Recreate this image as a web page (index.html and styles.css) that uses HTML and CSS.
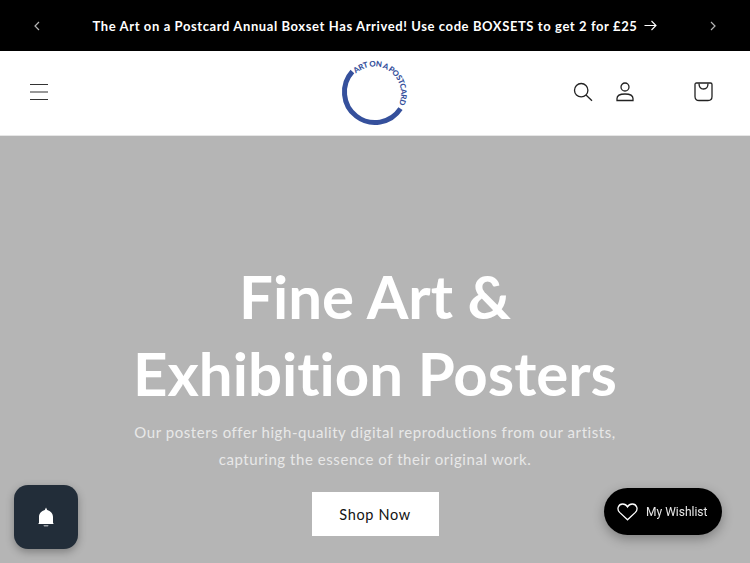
FILE: index.html
```html
<!DOCTYPE html>
<html lang="en">
<head>
<meta charset="utf-8">
<title>Art on a Postcard</title>
<link rel="stylesheet" href="styles.css">
</head>
<body>
<div class="announce">
  <button class="chev" aria-label="Previous"><svg width="8" height="10" viewBox="0 0 8 10"><path d="M6 1 2 5l4 4" fill="none" stroke="#b5b5b5" stroke-width="1.2"/></svg></button>
  <a class="announce-text">The Art on a Postcard Annual Boxset Has Arrived! Use code BOXSETS to get 2 for £25
    <svg class="arrow" width="13" height="11" viewBox="0 0 13 11"><path d="M0.5 5.5h11M7.5 1l4.5 4.5L7.5 10" fill="none" stroke="#fff" stroke-width="1.1"/></svg>
  </a>
  <button class="chev" aria-label="Next"><svg width="8" height="10" viewBox="0 0 8 10"><path d="M2 1l4 4-4 4" fill="none" stroke="#b5b5b5" stroke-width="1.2"/></svg></button>
</div>
<header class="header">
  <div class="header-left">
    <svg width="20" height="18" viewBox="0 0 20 18"><path d="M1 1.500h18M1 9h18M1 16.500h18" stroke="#333" stroke-width="1.1" fill="none"/></svg>
  </div>
  <a class="logo">
    <svg width="76" height="76" viewBox="0 0 76 76">
      <defs><path id="ring" d="M19 19.500A27 27 0 0 1 62 50"/></defs>
      <path d="M15.400 17.500A30.500 30.500 0 1 0 63.500 54.700" fill="none" stroke="#35509c" stroke-width="5"/>
      <text class="logo-text"><textPath href="#ring" textLength="73" lengthAdjust="spacing">ART ON A POSTCARD</textPath></text>
    </svg>
  </a>
  <div class="header-icons">
    <svg class="icon-search" width="20" height="20" viewBox="0 0 20 20"><circle cx="8.200" cy="8.200" r="6.700" fill="none" stroke="#222" stroke-width="1.300"/><path d="M13 13l6 5.800" stroke="#222" stroke-width="1.300"/></svg>
    <svg class="icon-user" width="18" height="20" viewBox="0 0 18 20"><circle cx="9" cy="5" r="4" fill="none" stroke="#222" stroke-width="1.300"/><path d="M1 18.500v-2c0-3 3-4.500 8-4.500s8 1.500 8 4.500v2z" fill="none" stroke="#222" stroke-width="1.300"/></svg>
    <svg class="icon-cart" width="19" height="20" viewBox="0 0 19 20"><path d="M2.500 1h14c1 0 1.500.6 1.500 1.500v12c0 2.500-1.500 4-4 4H5c-2.500 0-4-1.500-4-4v-12C1 1.600 1.500 1 2.500 1z" fill="none" stroke="#222" stroke-width="1.300"/><path d="M5 1.500c0 3.500 2 5.500 4.500 5.500S14 5 14 1.500" fill="none" stroke="#222" stroke-width="1.300"/></svg>
  </div>
</header>
<main class="hero">
  <h1 class="hero-title">Fine Art &amp;<br>Exhibition Posters</h1>
  <p class="hero-text">Our posters offer high-quality digital reproductions from our artists,<br>capturing the essence of their original work.</p>
  <a class="hero-btn">Shop Now</a>
</main>
<div class="bell">
  <svg class="bell-icon" width="20" height="22" viewBox="0 0 20 22"><path d="M10 0.500l1.200 2.600C14.500 4 17 6.500 17 10v5.500c0 .9.600 1.500 1.400 1.500H1.600c.8 0 1.400-.6 1.400-1.500V10c0-3.500 2.500-6 5.800-6.900z" fill="#fff"/><path d="M7.500 18h5l-.5 1.500H8z" fill="#9aa0a6"/></svg>
</div>
<div class="wishlist">
  <svg width="21" height="18" viewBox="0 0 21 18"><path d="M10.500 16.800 2.600 9.400C-.6 6.200 1.300 1 5.700 1c2.200 0 3.800 1.100 4.800 2.900C11.500 2.100 13.100 1 15.300 1c4.400 0 6.300 5.200 3.100 8.400z" fill="none" stroke="#fff" stroke-width="1.300"/></svg>
  <span>My Wishlist</span>
</div>
</body>
</html>
```
FILE: styles.css
```css
* { box-sizing: border-box; }
html, body { margin: 0; padding: 0; height: 563px; overflow: hidden; }
body { font-family: Lato, "Liberation Sans", sans-serif; background: #fff; color: #121212; font-variant-ligatures: none; }

.announce {
  height: 51px;
  background: #000;
  display: flex;
  align-items: center;
  justify-content: space-between;
  padding: 0 32px;
}
.chev { background: none; border: 0; padding: 0; width: 10px; display: flex; justify-content: center; }
.announce-text {
  color: #fff;
  font-size: 13px;
  font-weight: 700;
  letter-spacing: .6px;
  white-space: nowrap;
  display: flex;
  align-items: center;
  gap: 7px;
}

.header {
  height: 85px;
  background: #fff;
  border-bottom: 1px solid #e6e6e6;
  display: grid;
  grid-template-columns: 1fr auto 1fr;
  align-items: center;
  padding: 0 29px;
}
.header-left { display: flex; margin-top: -2px; }
.logo { display: flex; margin-top: -2px; }
.logo-text { font-family: Lato, sans-serif; font-size: 7.800px; font-weight: 900; fill: #35509c; }
.header-icons { display: flex; align-items: center; justify-content: flex-end; margin-top: -2px; padding-right: 8px; }
.icon-search { margin-right: 23px; }
.icon-user { margin-right: 60px; }

.hero {
  height: 428px;
  background: #b5b5b5;
  display: flex;
  flex-direction: column;
  align-items: center;
  text-align: center;
  padding-top: 122px;
  overflow: hidden;
}
.hero-title {
  margin: 0;
  color: #fff;
  font-size: 60px;
  line-height: 77px;
  font-weight: 700;
}
.hero-text {
  margin: 7px 0 0;
  color: #e8e8e8;
  font-size: 15px;
  line-height: 27px;
  letter-spacing: .56px;
}
.hero-btn {
  margin-top: 19px;
  width: 127px;
  height: 44px;
  background: #fff;
  color: #121212;
  font-size: 14.500px;
  letter-spacing: .65px;
  display: flex;
  align-items: center;
  justify-content: center;
}

.bell {
  position: fixed;
  left: 14px;
  top: 485px;
  width: 64px;
  height: 64px;
  border-radius: 14px;
  background: #222d39;
  box-shadow: 0 3px 8px rgba(0,0,0,.3);
  display: flex;
  align-items: center;
  justify-content: center;
}
.bell-icon { margin-top: 2px; }
.wishlist {
  position: fixed;
  left: 604px;
  top: 488px;
  width: 118px;
  height: 47px;
  border-radius: 24px;
  background: #000;
  color: #e8e8e8;
  box-shadow: 0 4px 12px rgba(0,0,0,.3);
  font-family: Roboto, sans-serif;
  font-size: 12px;
  display: flex;
  align-items: center;
  padding-left: 13px;
  gap: 8px;
}
```
